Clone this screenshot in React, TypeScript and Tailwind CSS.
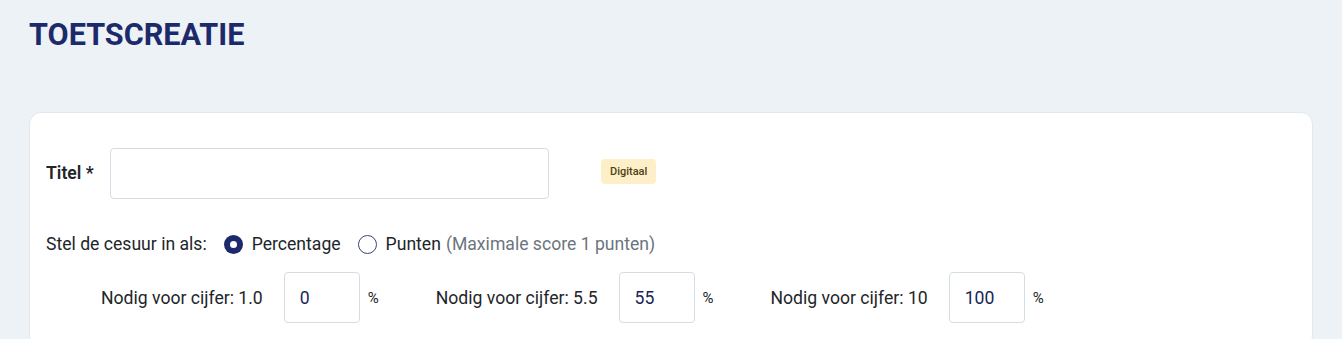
import React from 'react';

const GRADES = [
  { grade: '1.0', value: '0' },
  { grade: '5.5', value: '55' },
  { grade: '10', value: '100' },
];

function Radio({ checked }: { checked?: boolean }) {
  if (checked) {
    return (
      <span className="flex h-[19px] w-[19px] shrink-0 items-center justify-center rounded-full bg-[#1c2a6b]">
        <span className="block h-[7px] w-[7px] rounded-full bg-white" />
      </span>
    );
  }
  return <span className="block h-[19px] w-[19px] shrink-0 rounded-full border-[1.5px] border-[#3b4577] bg-white" />;
}

export default function App() {
  return (
    <div className="min-h-[339px] bg-[#edf2f7] px-[29px] pt-[17px] font-['Roboto',sans-serif] text-[#212529]">
      <h1 className="text-[30.6px] font-bold leading-[36px] text-[#1c2a6b]">TOETSCREATIE</h1>

      {/* Card */}
      <div className="mt-[59px] rounded-[12px] border border-[#e2e8ee] bg-white px-4 pt-[35px] pb-6">
        {/* Titel */}
        <div className="flex items-center">
          <label className="w-[64px] text-[17.6px] font-semibold">Titel *</label>
          <input className="h-[51px] w-[439px] rounded-[4px] border border-[#d3dde3] px-3 outline-none" />
          <span className="ml-[52px] -mt-[4px] rounded-[4px] bg-[#fdf0c8] px-[9px] py-[5px] text-[11px] font-medium leading-[15px] text-[#4d3f12]">
            Digitaal
          </span>
        </div>

        {/* Cesuur */}
        <div className="mt-[32px] flex items-center text-[17.6px]">
          <span>Stel de cesuur in als:</span>
          <span className="ml-[17px] flex"><Radio checked /></span>
          <span className="ml-[9px]">Percentage</span>
          <span className="ml-[17px] flex"><Radio /></span>
          <span className="ml-[9px]">Punten</span>
          <span className="ml-[5px] text-[#6c757d]">(Maximale score 1 punten)</span>
        </div>

        {/* Grenzen */}
        <div className="mt-[15px] flex items-center pl-[55px] text-[17.6px]">
          {GRADES.map(g => (
            <div key={g.grade} className="mr-[57px] flex items-center">
              <span>Nodig voor cijfer: {g.grade}</span>
              <input
                defaultValue={g.value}
                className="ml-[21px] h-[51px] w-[76px] rounded-[4px] border border-[#d3dde3] px-[15px] text-[#1a2456] outline-none"
              />
              <span className="ml-[8px] text-[15px]">%</span>
            </div>
          ))}
        </div>
      </div>
    </div>
  );
}
